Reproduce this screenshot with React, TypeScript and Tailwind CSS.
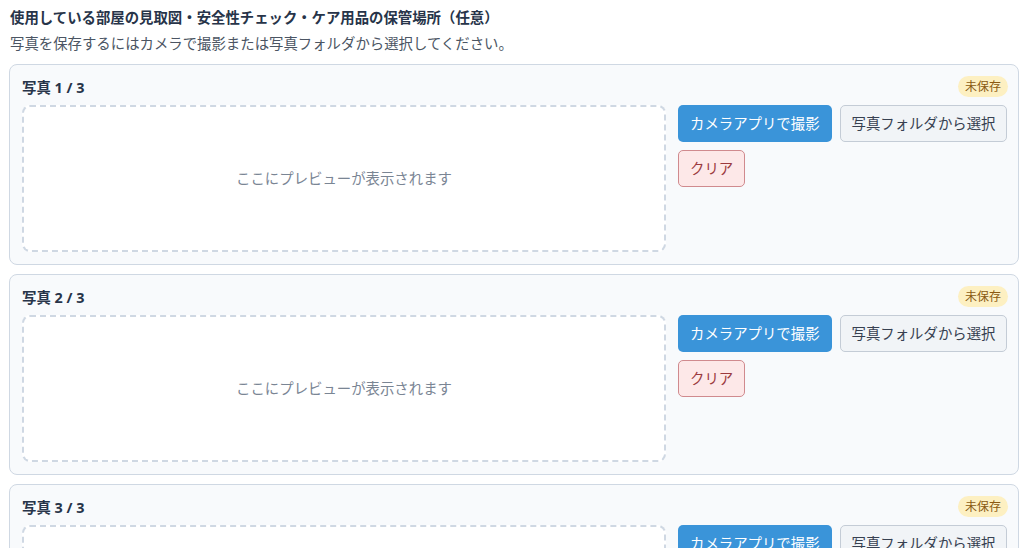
const photos = [1, 2, 3];

const PhotoCard = ({ index }: { index: number }) => {
  return (
    <div className="rounded-lg border border-[#cfd8e3] bg-[#f8fafc] pb-3 pl-3 pr-[10px] pt-[11px]">
      {/* Header */}
      <div className="flex h-[21px] items-center justify-between">
        <p className="mt-[3px] text-[14.4px] font-bold text-[#273449]">
          写真 {index} / {photos.length}
        </p>

        <span className="rounded-full bg-[#fdf0c2] px-[7px] py-[2px] text-[12px] leading-[17px] text-[#8a5a12]">
          未保存
        </span>
      </div>

      {/* Body */}
      <div className="mt-2 flex gap-3">
        <div className="flex h-[147px] w-[644px] shrink-0 items-center justify-center rounded-lg border-2 border-dashed border-[#cfd8e3] bg-white">
          <p className="text-[14.4px] text-[#7a8594]">
            ここにプレビューが表示されます
          </p>
        </div>

        <div className="flex min-w-0 flex-1 flex-wrap content-start gap-2">
          <button
            type="button"
            className="h-[37px] rounded-[5px] bg-[#3a94d9] px-3 text-[14.4px] text-white"
          >
            カメラアプリで撮影
          </button>

          <button
            type="button"
            className="h-[37px] rounded-[5px] border border-[#c4ccd6] bg-[#f1f4f7] px-[11px] text-[14.4px] text-[#374151]"
          >
            写真フォルダから選択
          </button>

          <button
            type="button"
            className="h-[37px] rounded-[5px] border border-[#d08a8e] bg-[#fde8e8] px-[11px] text-[14.4px] text-[#9b3a3e]"
          >
            クリア
          </button>
        </div>
      </div>
    </div>
  );
};

const App = () => {
  return (
    <div
      className="min-h-screen bg-white pl-[9px] pr-[5px] pt-2"
      style={{ fontFamily: '"Noto Sans", "Noto Sans CJK JP", sans-serif' }}
    >
      {/* Heading */}
      <h1 className="pl-px text-[14.4px] font-bold leading-5 text-[#273449]">
        使用している部屋の見取図・安全性チェック・ケア用品の保管場所（任意）
      </h1>

      <p className="mt-[6px] pl-px text-[14.4px] leading-5 text-[#4b5563]">
        写真を保存するにはカメラで撮影または写真フォルダから選択してください。
      </p>

      {/* Cards */}
      <div className="mt-[10px] space-y-[9px]">
        {photos.map((index) => (
          <PhotoCard key={index} index={index} />
        ))}
      </div>
    </div>
  );
};

export default App;
